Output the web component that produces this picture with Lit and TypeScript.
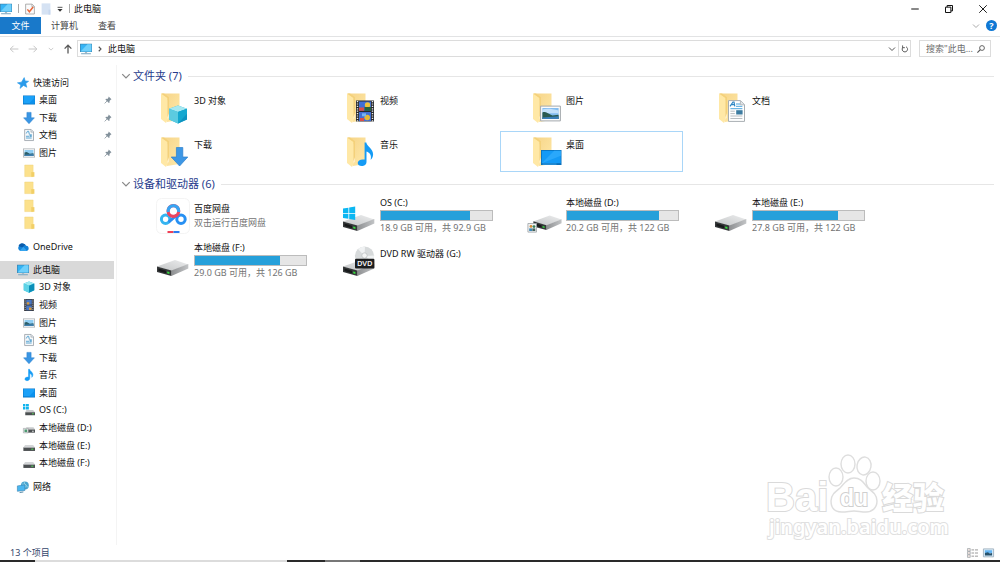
import { LitElement, html, svg, css, nothing, TemplateResult } from "lit";
import { customElement, property } from "lit/decorators.js";

/* ---------- Small icons, 16 x 16 grid ---------- */

const small: Record<string, TemplateResult> = {
  pc: svg`<rect x="0" y="1" width="16" height="11" fill="#3d7fa8"/><rect x=".8" y="1.8" width="14.4" height="9.5" fill="#35b4f5"/><path d="M.8 11.3 10 1.8h5.2v9.5z" fill="#6fd0fb"/><path d="M6.5 12h3v1.6h-3z" fill="#a8bac6"/><path d="M1.5 13.6h13v1.4h-13z" fill="#7fa9c2"/>`,
  star: svg`<path d="M9.6.8l1.3 4.4 4.6.5-3.8 2.8 1.4 5.2-4.4-2.4L4 15.2l1-4.6L.6 7.8l5.4-.9z" fill="#2a9bea" stroke="#2a9bea" stroke-width=".8"/>`,
  desktop: svg`<rect x="0" y="2" width="16" height="12" fill="#0b78c8"/><rect x=".7" y="2.7" width="14.6" height="9.8" fill="#1ba1f8"/><path d="M8 12.5 15.3 5v7.5z" fill="#0c92ee"/>`,
  download: svg`<path d="M5.2.5h5.6v7.3h4.4L8 15.6.8 7.8h4.4z" fill="#3a96e4" stroke="#2b7fce" stroke-width=".7"/>`,
  document: svg`<path d="M2.2.6h8.6L14 3.8v11.6H2.2z" fill="#f6f8fa" stroke="#929aa1"/><path d="M10.6.8v3.4H14" fill="#dce2e6" stroke="#929aa1" stroke-width=".7"/><path d="M4.3 6 6 3h1.5l1 4.4M4 9.7h4M4 12h7.6" stroke="#4b9dce" stroke-width="1.2" fill="none"/><path d="M8.7 7h3v3.6h-3z" fill="#66a9d2"/>`,
  picture: svg`<rect x=".5" y="2.5" width="15" height="11" fill="#fff" stroke="#a5abb0"/><path d="M2 4h12v8H2z" fill="#8fcdf3"/><path d="M2 7.2 5 6.5l4 2.5 5-.8V12H2z" fill="#2d5d67"/><path d="M2 10.4l12-1V12H2z" fill="#3e7fae"/>`,
  folder: svg`<path d="M2.3 0h11.2v15.5H2.3z" fill="#fce18c" stroke="#f0d27b" stroke-width=".6"/><path d="M11 9.5h4.2v6.2H11z" fill="#f2cf67"/>`,
  cloud: svg`<path d="M4.2 13.2A4 4 0 0 1 3.5 6a5 5 0 0 1 8.8.4 3.5 3.5 0 0 1 1 6.8z" fill="#1382d8"/><path d="M2 6.8A5 5 0 0 1 10.9 5L7.4 8.6z" fill="#0b5cab"/><path d="M3.5 13.2 8.3 7.8l5.2 5.4z" fill="#35a4ee"/>`,
  cube: svg`<path d="M8 .6 15 3.4v9L8 15.6l-7-3.2v-9z" fill="#2bb8d8"/><path d="M8 .6 15 3.4 8 6.2 1 3.4z" fill="#9eeaf2"/><path d="M8 6.2 15 3.4v9L8 15.6z" fill="#0b8fb8"/><path d="M1 3.4 8 6.2v9.4l-7-3.2z" fill="#5dd3e6"/>`,
  video: svg`<path d="M1.5 0h13v16h-13z" fill="#3a3c42"/><path d="M4.3 1h7.4v6.3H4.3zM4.3 8.5h7.4V15H4.3z" fill="#4a78c4"/><path d="M5 4.2h3.4v3H5zM8 11.2h3.4v3.6H8z" fill="#d99a3c"/><path d="M2.9.8v15M13.1.8v15" stroke="#cfd2d6" stroke-width="1.1" stroke-dasharray="1.2 1.3"/>`,
  music: svg`<path d="M7.4.4h1.4c.5 2.9 4.6 3.9 4.4 7.4-.1 1.5-.7 2.6-1.5 3.3.8-2.7-.4-4.3-2.7-5.2v6.4c0 2-1.7 3.2-3.6 3.2-1.6 0-2.8-.8-2.8-2.1 0-1.6 1.9-2.9 4.8-2.5z" fill="#149bf5" stroke="#149bf5" stroke-width=".7"/>`,
  drive: svg`<path d="M2.8 6.5h10.7L16 10H.5z" fill="#d4d6d8"/><path d="M.5 10H16v4.6H.5z" fill="#4c5052"/><path d="M.5 9.4H16v1H.5z" fill="#aeb1b3"/><path d="M11 11.5h2.8V13H11z" fill="#51cc57"/>`,
  driveOs: svg`<path d="M0 0h3.2v3.2H0zM4 0h3.8v3.2H4zM0 4h3.2v3.2H0zM4 4h3.8v3.2H4z" fill="#10b4ee"/><path d="M4.5 8h9L16 11H3z" fill="#c9cbcd"/><path d="M3 11h13v4H3z" fill="#4c5052"/><path d="M12 12.4h2.4v1.3H12z" fill="#51cc57"/>`,
  driveShared: svg`<path d="M4.5 7h9.5l2 3H3z" fill="#c9cbcd"/><path d="M3 10h13v4.2H3z" fill="#4c5052"/><path d="M.5 8.5H7v6H.5z" fill="#e8eaeb" stroke="#8c9296" stroke-width=".7"/><path d="M2 10h3.5v3.4H2z" fill="#4d9a70"/><path d="M12 11.6h2.4V13H12z" fill="#d9dcdd"/>`,
  network: svg`<circle cx="10.5" cy="6" r="5.3" fill="#4aa4cf"/><path d="M6 3.6c2 1.6 4.2-.4 6 1.4s.6 3.6 3.4 3M10 .8c-1.5 3 2.4 3.4 1.6 8" stroke="#9bd9ea" stroke-width="1.1" fill="none"/><path d="M.5 6.5 10.5 5v7.6l-10 1.2z" fill="#4ab6ef" stroke="#2c79a8" stroke-width=".7"/><path d="M3.5 15.4l5-.8" stroke="#5689a5" stroke-width="1.3"/>`,
  pin: svg`<path d="M9.3 1 15 6.7l-1.6.6-2.4 2.5.1 3-1.3 1-7-7L4 5.7l2.8.2 2.2-2.8z" fill="#83919b"/><path d="M6 10l-4.6 4.8" stroke="#83919b" stroke-width="1.6"/>`,
  check: svg`<path d="M1 .2h10.3L15 4v12H1z" fill="#fbfbfb" stroke="#969696" stroke-width="1.2"/><path d="M11 .5v3.9h3.8" fill="none" stroke="#969696"/><path d="M3.8 8.6 7 12.4l6-7.6" fill="none" stroke="#e8663a" stroke-width="2.4"/>`,
  blank: svg`<path d="M1-1h14v18H1z" fill="#d5e2f3"/><path d="M12 9h3v8h-3z" fill="#c6d7ee"/>`,
  more: svg`<path d="M1.5 3.5h13" stroke="#333" stroke-width="2.2"/><path d="M1.2 8h13.6L8 15z" fill="#333"/>`,
  back: svg`<path d="M15 8H2M7.2 2.8 2 8l5.2 5.2" fill="none" stroke="#c6c6c6" stroke-width="1.6"/>`,
  forward: svg`<path d="M1 8h13M8.8 2.8 14 8l-5.2 5.2" fill="none" stroke="#c6c6c6" stroke-width="1.6"/>`,
  up: svg`<path d="M8 15V2M2.6 7.4 8 2l5.4 5.4" fill="none" stroke="#5a5a5a" stroke-width="2.1"/>`,
  chevron: svg`<path d="M2 5 8 11l6-6" fill="none" stroke="currentColor" stroke-width="2"/>`,
  right: svg`<path d="M5.5 3.5 10 8l-4.5 4.5" fill="none" stroke="#555" stroke-width="2.2"/>`,
  refresh: svg`<path d="M10.2 3.6A5.4 5.4 0 1 1 4.6 4" fill="none" stroke="#5c5c5c" stroke-width="2"/><path d="M3.2.8v4.6h4.6" fill="none" stroke="#5c5c5c" stroke-width="1.9"/>`,
  search: svg`<circle cx="10" cy="6" r="4.8" fill="none" stroke="#555" stroke-width="1.8"/><path d="M6.6 9.4.8 15.2" stroke="#555" stroke-width="2.2"/>`,
  minimize: svg`<path d="M2 8h12" stroke="#111" stroke-width="1.6"/>`,
  restore: svg`<path d="M2.4 5h8.6v8.6H2.4zM5 5V2.4h8.6V11H11" fill="none" stroke="#111" stroke-width="1.6"/>`,
  close: svg`<path d="M2 2l12 12M14 2 2 14" stroke="#111" stroke-width="1.5"/>`,
  details: svg`<path d="M.7 1.5h4v3.8h-4zM.7 6h4v3.8h-4zM.7 10.6h4v3.8h-4z" fill="#f3e6e3" stroke="#8f989e" stroke-width=".9"/><path d="M6.5 3.5h3.7M11.5 3.5H16M6.5 8h3.7M11.5 8H16M6.5 12.6h3.7M11.5 12.6H16" stroke="#8d8d8d" stroke-width="1.3"/>`,
  large: svg`<path d="M.6 2h14.8v11.6H.6z" fill="#d8ecfa" stroke="#9aabb8" stroke-width="1.2"/><path d="M2.8 4h10.4v4H2.8z" fill="#64b5f3"/><path d="M2.8 8 7 7l3 1.6 3.2-.6v3.6H2.8z" fill="#27516b"/>`,
};

/* ---------- Large icons, 34 x 34 grid ---------- */

const folderBase = svg`
  <path d="M6 2.5h17.5V29L11 31z" fill="url(#back)"/>
  <path d="M11.3 9.5v19l1.2-1.6V8.4z" fill="#fffaf0"/>
  <path d="M5 2.5l6.6 4.2v22L10 32l-5-4z" fill="#ffe8a6"/>
  <path d="M5 2.5 8 2.5l5 3.7v16l-1.6 4V7z" fill="#f4d17a"/>`;

const driveBase = svg`
  <path d="M1 22.6 19 16l13.3 4.4L15.4 27z" fill="url(#lid)"/>
  <path d="M15.4 26.6 32.3 20v4.6L15.4 32z" fill="url(#side)"/>
  <path d="M1 22.4l14.4 4.2V32L1 28z" fill="#353839"/>
  <path d="M2.5 24.6l7.5 2.2v2.4l-7.5-2.1z" fill="#17191a"/>
  <path d="M11.2 27.5l2.2.6v1.8l-2.2-.6z" fill="#35e03c"/>`;

const large: Record<string, TemplateResult> = {
  cube: svg`${folderBase}<path d="M22 14.5l9 3.2v10.8L22 32.5l-9-4V17.7z" fill="#2ab3d5"/><path d="M22 14.5l9 3.2-9 3.4-9-3.4z" fill="#a6e8f1"/><path d="M22 21.1l9-3.4v10.8l-9 4z" fill="#0d93c0"/><path d="M13 17.7l9 3.4v11.4l-9-4z" fill="#5ccbe0"/><path d="M22 21.1l9-3.4v5l-9 9.8z" fill="#18b4d8" opacity=".65"/>`,
  video: svg`${folderBase}<path d="M14 9.5h18v21H14z" fill="#26282c"/><path d="M17 10.5h12v9.3H17zM17 21h12v9H17z" fill="#3f6fd6"/><path d="M17 16.6h5v3.2h-5zM18 27h4v3h-4z" fill="#d94e48"/><circle cx="25.5" cy="14" r="2.7" fill="#efc338"/><path d="M22.5 16h6.5v3.8h-6.5z" fill="#26633e"/><circle cx="25.2" cy="26.5" r="2.8" fill="#e3b936"/><path d="M20 22.3h4v3h-4z" fill="#78b4f1"/><path d="M15.5 10v20.5M30.5 10v20.5" stroke="#eee" stroke-width="1.4" stroke-dasharray="1.2 1.2"/>`,
  picture: svg`${folderBase}<path d="M12.6 15.1h19.8v14.8H12.6z" fill="#fbfbfb" stroke="#a4a9ad"/><path d="M14.4 17h16.2v11H14.4z" fill="#84bdf0"/><path d="M14.4 18.4c4-1 9-.8 16.2 1v2.8H14.4z" fill="#c3e0fa"/><path d="M14.4 21.4c2-.8 3-.3 5 .6l5 2.4 6.2-.6V28H14.4z" fill="#2a5a50"/><path d="M14.4 26.6l16.2-1.3V28H14.4z" fill="#3a7eb8"/>`,
  document: svg`${folderBase}<path d="M14.5 9.6h12l4 4v16.8h-16z" fill="#fff" stroke="#a8aeb2"/><path d="M26.4 9.8v4h4" fill="#e0e4e7" stroke="#a8aeb2" stroke-width=".8"/><path d="M16 15.4l3-4.4h1l.8 4.4M17.3 13.7h3.2" fill="none" stroke="#2d86c4" stroke-width="1.2"/><path d="M22 13h4M22 15.3h6.4M16.4 17.7h12" stroke="#4aa5de"/><path d="M16.4 20.2h4.4M16.4 22.6h4.4M16.4 25h12M16.4 27.5h12" stroke="#b9bec2"/><path d="M22.2 19.2h6.4v4.3h-6.4z" fill="#3d7ca1"/>`,
  download: svg`${folderBase}<path d="M20.4 12.5h6.4V22h5L23.6 31l-8.4-9h5.2z" fill="#3d97e5" stroke="#2b80cd" stroke-width=".7"/>`,
  music: svg`${folderBase}<path d="M22.6 7.5h1.7c.6 4.2 7 6 6.8 12-.1 2.6-1.2 4.3-2.5 5.3 1.3-4.3-.6-6.9-4.1-8.3v10.2c0 2.9-2.4 4.3-4.8 4.3-2.2 0-4-1.1-4-3 0-2.5 3.1-4.2 6.9-3.4z" fill="#149bf5"/>`,
  desktop: svg`${folderBase}<path d="M13 15h20.5v15H13z" fill="#0b6fb8"/><path d="M13.8 15.8h19v12.4h-19z" fill="#149af6"/><path d="M13.8 28.2l12.4-12.4h6.6v5z" fill="#2aa8fb"/><path d="M14.5 29.1h14" stroke="#53c0ff" stroke-width=".6"/>`,
  netdisk: svg`<rect x=".5" y="-.5" width="33" height="35" rx="5" fill="#fff" stroke="#f4f4f4"/><circle cx="9.6" cy="20.2" r="4.2" fill="none" stroke="#35b4f0" stroke-width="3"/><circle cx="25" cy="20.2" r="4.2" fill="none" stroke="#2790f3" stroke-width="3"/><path d="M12.6 23.2l8-7" stroke="#2b8ff2" stroke-width="3"/><circle cx="17.4" cy="12" r="5.3" fill="none" stroke="#ed4460" stroke-width="3.2"/><path d="M12.2 13a5.3 5.3 0 1 1 10.4 0" fill="none" stroke="#38a4f2" stroke-width="3.2"/><path d="M11.5 32h6v2h-6z" fill="#f03f55"/><path d="M17.5 32h6v2h-6z" fill="#2a7af0"/>`,
  drive: driveBase,
  driveOs: svg`${driveBase}<path d="M1 9.6l5.4-.9v5.2H1zM7.2 8.6l6-1v6.3h-6zM1 14.7h5.4v5.1L1 19zM7.2 14.7h6v6.2l-6-.9z" fill="#0cb7f2"/>`,
  driveShared: svg`<g transform="translate(4.5 2.2) scale(.9)">${driveBase}</g><path d="M-.1 24.5h8.6v8.6h-8.6z" fill="#f1f2f3" stroke="#9da3a7" stroke-width=".8"/><circle cx="3" cy="27.4" r="1.4" fill="#d08a35"/><circle cx="6" cy="27.6" r="1.4" fill="#367e56"/><path d="M1.2 29.4H4V32H1.2z" fill="#3c87b7"/><path d="M4.3 29.4h3V32h-3z" fill="#46635a"/>`,
  dvd: svg`${driveBase}<circle cx="22.5" cy="12" r="9.6" fill="#d7dadb"/><path d="M22.5 12 16 5a9.6 9.6 0 0 1 7-2.6zM22.5 12l8 5.5a9.6 9.6 0 0 0 1.5-6z" fill="#f0f2f3"/><circle cx="22.5" cy="11.5" r="2.7" fill="#f4f5f5" stroke="#bcc0c2" stroke-width=".8"/><rect x="13" y="14.8" width="19.4" height="9.6" rx="1" fill="#1d1e1f"/><text x="22.7" y="22.4" text-anchor="middle" font-family="Noto Sans, sans-serif" font-weight="600" font-size="7.5" fill="#f2f2f2">DVD</text>`,
};

@customElement("ui-icon")
class UiIcon extends LitElement {
  static styles = css`
    :host { display: inline-flex; flex: none; width: 12px; height: 12px; }
    :host([size="large"]) { width: 34px; height: 34px; }
    .art { display: block; width: 100%; height: 100%; overflow: visible; }
  `;
  @property() name = "pc";
  @property({ reflect: true }) size = "small";

  render() {
    if (this.size !== "large") {
      return html`<svg class="art" viewBox="0 0 16 16" aria-hidden="true">${small[this.name]}</svg>`;
    }
    return html`<svg class="art" viewBox="0 0 34 34" aria-hidden="true">
      <defs>
        <linearGradient id="back" x1="0" y1="0" x2="1" y2="1"><stop stop-color="#f6d488"/><stop offset="1" stop-color="#ffe9a9"/></linearGradient>
        <linearGradient id="lid" x1="0" y1="1" x2="1" y2="0"><stop stop-color="#c3c5c6"/><stop offset="1" stop-color="#ecedee"/></linearGradient>
        <linearGradient id="side"><stop stop-color="#8e9092"/><stop offset="1" stop-color="#c2c4c6"/></linearGradient>
      </defs>
      ${large[this.name]}
    </svg>`;
  }
}

/* ---------- Navigation tree ---------- */

interface Node { label: string; icon: string; pinned?: boolean; root?: boolean; current?: boolean; }

const tree: Node[][] = [
  [
    { label: "快速访问", icon: "star", root: true },
    { label: "桌面", icon: "desktop", pinned: true },
    { label: "下载", icon: "download", pinned: true },
    { label: "文档", icon: "document", pinned: true },
    { label: "图片", icon: "picture", pinned: true },
    { label: "", icon: "folder" },
    { label: "", icon: "folder" },
    { label: "", icon: "folder" },
    { label: "", icon: "folder" },
  ],
  [{ label: "OneDrive", icon: "cloud", root: true }],
  [
    { label: "此电脑", icon: "pc", root: true, current: true },
    { label: "3D 对象", icon: "cube" },
    { label: "视频", icon: "video" },
    { label: "图片", icon: "picture" },
    { label: "文档", icon: "document" },
    { label: "下载", icon: "download" },
    { label: "音乐", icon: "music" },
    { label: "桌面", icon: "desktop" },
    { label: "OS (C:)", icon: "driveOs" },
    { label: "本地磁盘 (D:)", icon: "driveShared" },
    { label: "本地磁盘 (E:)", icon: "drive" },
    { label: "本地磁盘 (F:)", icon: "drive" },
  ],
  [{ label: "网络", icon: "network", root: true }],
];

@customElement("nav-tree")
class NavTree extends LitElement {
  static styles = css`
    :host { display: block; }
    .tree { display: grid; grid-template-rows: 158px 17px 211px 17px; row-gap: 6px; padding-top: 9px; }
    .group { display: grid; grid-auto-rows: 1fr; margin: 0; padding: 0; list-style: none; }
    .node { display: flex; }
    .link { flex: 1; display: flex; align-items: center; gap: 4px; padding: 0 2px 0 23px; color: #111; text-decoration: none; white-space: nowrap; }
    .root { padding-left: 17px; }
    .current { background: #d9d9d9; }
    .label { flex: 1; }
    .pin { width: 8px; height: 8px; }
  `;
  render() {
    return html`<nav class="tree" aria-label="导航窗格">
      ${tree.map((group) => html`<ul class="group">
        ${group.map((n) => html`<li class="node">
          <a class="link ${n.root ? "root" : ""} ${n.current ? "current" : ""}" href="#">
            <ui-icon name=${n.icon}></ui-icon><span class="label">${n.label}</span>
            ${n.pinned ? html`<ui-icon class="pin" name="pin"></ui-icon>` : nothing}
          </a>
        </li>`)}
      </ul>`)}
    </nav>`;
  }
}

/* ---------- Content tiles ---------- */

interface Item { name: string; icon: string; note?: string; used?: number; focused?: boolean; }

const sections: { title: string; items: Item[] }[] = [
  {
    title: "文件夹 (7)",
    items: [
      { name: "3D 对象", icon: "cube" },
      { name: "视频", icon: "video" },
      { name: "图片", icon: "picture" },
      { name: "文档", icon: "document" },
      { name: "下载", icon: "download" },
      { name: "音乐", icon: "music" },
      { name: "桌面", icon: "desktop", focused: true },
    ],
  },
  {
    title: "设备和驱动器 (6)",
    items: [
      { name: "百度网盘", icon: "netdisk", note: "双击运行百度网盘" },
      { name: "OS (C:)", icon: "driveOs", used: 80, note: "18.9 GB 可用，共 92.9 GB" },
      { name: "本地磁盘 (D:)", icon: "driveShared", used: 83, note: "20.2 GB 可用，共 122 GB" },
      { name: "本地磁盘 (E:)", icon: "drive", used: 77, note: "27.8 GB 可用，共 122 GB" },
      { name: "本地磁盘 (F:)", icon: "drive", used: 77, note: "29.0 GB 可用，共 126 GB" },
      { name: "DVD RW 驱动器 (G:)", icon: "dvd" },
    ],
  },
];

@customElement("item-tile")
class ItemTile extends LitElement {
  static styles = css`
    :host { display: block; }
    .tile { display: flex; align-items: center; gap: 4px; box-sizing: border-box; width: 100%; height: 41px; padding: 0 0 0 27px; border: 1px solid transparent; background: none; font: inherit; color: #111; text-align: left; }
    .focused { border-color: #a9d6f8; }
    .info { display: flex; flex-direction: column; white-space: nowrap; line-height: 14px; }
    .plain { align-self: flex-start; padding-top: 6px; }
    .bar { display: block; box-sizing: border-box; width: 113px; height: 11px; border: 1px solid #bcbcbc; background: #e6e6e6; }
    .fill { display: block; height: 100%; background: #26a0da; }
    .note { color: #737373; }
  `;
  @property({ attribute: false }) item!: Item;

  render() {
    const { name, icon, note, used, focused } = this.item;
    return html`<button class="tile ${focused ? "focused" : ""}">
      <ui-icon size="large" name=${icon}></ui-icon>
      <span class="info ${note ? "" : "plain"}">
        <span>${name}</span>
        ${used === undefined ? nothing : html`<span class="bar"><span class="fill" style="width:${used}%"></span></span>`}
        ${note ? html`<span class="note">${note}</span>` : nothing}
      </span>
    </button>`;
  }
}

/* ---------- Watermark ---------- */

@customElement("site-watermark")
class SiteWatermark extends LitElement {
  static styles = css`
    :host { display: block; width: 190px; height: 90px; }
    .mark { display: block; overflow: visible; }
    .shape { fill: #fff; stroke: #dedede; stroke-width: 1.4; }
    .text { fill: #fff; stroke: #dadada; stroke-width: 2; paint-order: stroke; font-family: "Liberation Sans", sans-serif; font-weight: 700; }
    .brand { font-size: 40px; }
    .paw { font-size: 23px; stroke: #cfcfcf; }
    .cjk { font-family: "Noto Sans CJK SC", sans-serif; font-size: 31px; font-weight: 900; }
    .site { font-family: "Noto Sans", sans-serif; font-size: 20px; font-weight: 600; stroke: #e0e0e0; }
  `;
  render() {
    return html`<svg class="mark" width="190" height="90" viewBox="0 0 190 90">
      <text class="text brand" x="4" y="55">Bai</text>
      <ellipse class="shape" cx="74" cy="21" rx="7" ry="9"/>
      <ellipse class="shape" cx="86" cy="8" rx="7" ry="9"/>
      <ellipse class="shape" cx="102" cy="10" rx="7" ry="9" transform="rotate(10 102 10)"/>
      <ellipse class="shape" cx="111" cy="25" rx="7" ry="9"/>
      <path class="shape" d="M92 22c8 0 10 6 14 10 5 4 9 7 9 13 0 7-5 11-11 11-5 0-8-1-12-1s-7 1-12 1c-7 0-11-4-11-11 0-6 4-9 9-13 4-4 7-10 14-10z"/>
      <text class="text paw" x="78" y="50">du</text>
      <text class="text cjk" x="120" y="53">经验</text>
      <text class="text site" x="7" y="78">jingyan.baidu.com</text>
    </svg>`;
  }
}

/* ---------- Window ---------- */

@customElement("app-root")
class AppRoot extends LitElement {
  static styles = css`
    :host { display: flex; flex-direction: column; position: relative; min-height: 100vh; background: #fff; color: #111; font: 9px/14px "Noto Sans", "Noto Sans CJK SC", sans-serif; }
    button { font: inherit; color: inherit; border: 0; padding: 0; background: none; display: flex; align-items: center; justify-content: center; }
    .titlebar { display: flex; align-items: center; height: 17px; }
    .quick { display: flex; align-items: center; gap: 6px; }
    .rule { width: 1px; height: 9px; background: #aaa; }
    .title { padding-left: 4px; }
    .controls { display: flex; margin-left: auto; }
    .control { width: 34px; height: 16px; }
    .s10 { width: 10px; height: 10px; }
    .s8 { width: 8px; height: 8px; }
    .s6 { width: 6px; height: 6px; }
    .ribbon { display: flex; align-items: stretch; height: 17px; padding-bottom: 2px; border-bottom: 1px solid #e2e3e4; }
    .tab { padding: 0 10px; color: #444; }
    .file { width: 41px; background: #1979ca; color: #fff; }
    .help { display: flex; align-items: center; gap: 6px; margin-left: auto; padding-right: 3px; color: #aaa; }
    .question { width: 11px; height: 11px; border-radius: 50%; background: #0f78d4; color: #fff; font-weight: 700; }
    .navbar { display: flex; align-items: center; padding: 3px 9px 4px; }
    .arrows { display: flex; align-items: center; justify-content: space-between; width: 64px; margin-right: 4px; color: #bbb; }
    .address { flex: 1; display: flex; align-items: center; box-sizing: border-box; height: 17px; border: 1px solid #dcdcdc; color: #555; }
    .crumb { display: flex; flex: 1; align-items: center; gap: 4px; padding-left: 2px; color: #111; }
    .drop { width: 12px; }
    .reload { width: 12px; height: 15px; border-left: 1px solid #dcdcdc; }
    .search { display: flex; align-items: center; box-sizing: border-box; width: 72px; height: 17px; margin-left: 8px; padding: 0 5px 0 6px; border: 1px solid #dcdcdc; }
    .query { flex: 1; min-width: 0; padding: 0; border: 0; outline: 0; background: none; font: inherit; }
    .query::placeholder { color: #6d6d6d; opacity: 1; }
    .body { flex: 1; display: flex; padding-top: 4px; }
    .side { box-sizing: border-box; width: 117px; padding-right: 2px; border-right: 1px solid #f4f4f4; }
    .content { flex: 1; display: flex; flex-direction: column; gap: 1px; padding-right: 6px; }
    .heading { display: flex; align-items: center; gap: 2px; height: 22px; margin: 0; padding-left: 4px; color: #263b8c; font-size: 11px; font-weight: 400; }
    .heading::after { content: ""; flex: 1; height: 1px; margin-left: 4px; background: #e6e6e6; }
    .toggle { color: #888; }
    .grid { display: grid; grid-template-columns: repeat(auto-fill, 183px); gap: 3px; padding-left: 11px; }
    .devices { row-gap: 4px; }
    .status { display: flex; align-items: center; height: 15px; padding: 0 6px 0 10px; color: #33466b; }
    .views { display: flex; gap: 5px; margin-left: auto; }
    .view { width: 11px; height: 12px; }
    .taskbar { display: flex; height: 2px; background: #2a2a2a; }
    .strip { width: 252px; margin-left: 35px; background: #dcdcdc; }
    .active { width: 35px; margin-left: 38px; background: #777; }
    .watermark { position: absolute; right: 48px; bottom: 16px; pointer-events: none; }
  `;

  render() {
    return html`
      <header class="titlebar" lang="zh-CN">
        <div class="quick">
          <ui-icon name="pc"></ui-icon><span class="rule"></span>
          <button aria-label="属性"><ui-icon name="check" class="s10"></ui-icon></button>
          <button aria-label="新建文件夹"><ui-icon name="blank" class="s10"></ui-icon></button>
          <button aria-label="自定义"><ui-icon name="more" class="s6"></ui-icon></button>
          <span class="rule"></span>
        </div>
        <span class="title">此电脑</span>
        <div class="controls">
          <button class="control" aria-label="最小化"><ui-icon name="minimize" class="s10"></ui-icon></button>
          <button class="control" aria-label="还原"><ui-icon name="restore" class="s10"></ui-icon></button>
          <button class="control" aria-label="关闭"><ui-icon name="close" class="s10"></ui-icon></button>
        </div>
      </header>

      <div class="ribbon">
        <button class="tab file">文件</button>
        <button class="tab">计算机</button>
        <button class="tab">查看</button>
        <div class="help">
          <button aria-label="展开功能区"><ui-icon name="chevron" class="s8"></ui-icon></button>
          <button class="question" aria-label="帮助">?</button>
        </div>
      </div>

      <div class="navbar">
        <div class="arrows">
          <button aria-label="返回"><ui-icon name="back" class="s10"></ui-icon></button>
          <button aria-label="前进"><ui-icon name="forward" class="s10"></ui-icon></button>
          <button aria-label="最近位置"><ui-icon name="chevron" class="s6"></ui-icon></button>
          <button aria-label="上移"><ui-icon name="up" class="s10"></ui-icon></button>
        </div>
        <div class="address">
          <div class="crumb"><ui-icon name="pc"></ui-icon><ui-icon name="right" class="s8"></ui-icon><span>此电脑</span></div>
          <button class="drop" aria-label="历史记录"><ui-icon name="chevron" class="s8"></ui-icon></button>
          <button class="reload" aria-label="刷新"><ui-icon name="refresh" class="s8"></ui-icon></button>
        </div>
        <label class="search">
          <input class="query" type="text" aria-label="搜索" placeholder='搜索"此电...' />
          <ui-icon name="search" class="s8"></ui-icon>
        </label>
      </div>

      <div class="body">
        <nav-tree class="side"></nav-tree>
        <main class="content">
          ${sections.map((s, i) => html`<section>
            <h2 class="heading"><ui-icon name="chevron" class="s10 toggle"></ui-icon>${s.title}</h2>
            <div class="grid ${i ? "devices" : ""}">${s.items.map((item) => html`<item-tile .item=${item}></item-tile>`)}</div>
          </section>`)}
        </main>
      </div>

      <footer class="status">
        <span>13 个项目</span>
        <div class="views">
          <button aria-label="详细信息"><ui-icon name="details" class="view"></ui-icon></button>
          <button aria-label="大图标"><ui-icon name="large" class="view"></ui-icon></button>
        </div>
      </footer>
      <div class="taskbar"><span class="strip"></span><span class="active"></span></div>
      <site-watermark class="watermark"></site-watermark>
    `;
  }
}
